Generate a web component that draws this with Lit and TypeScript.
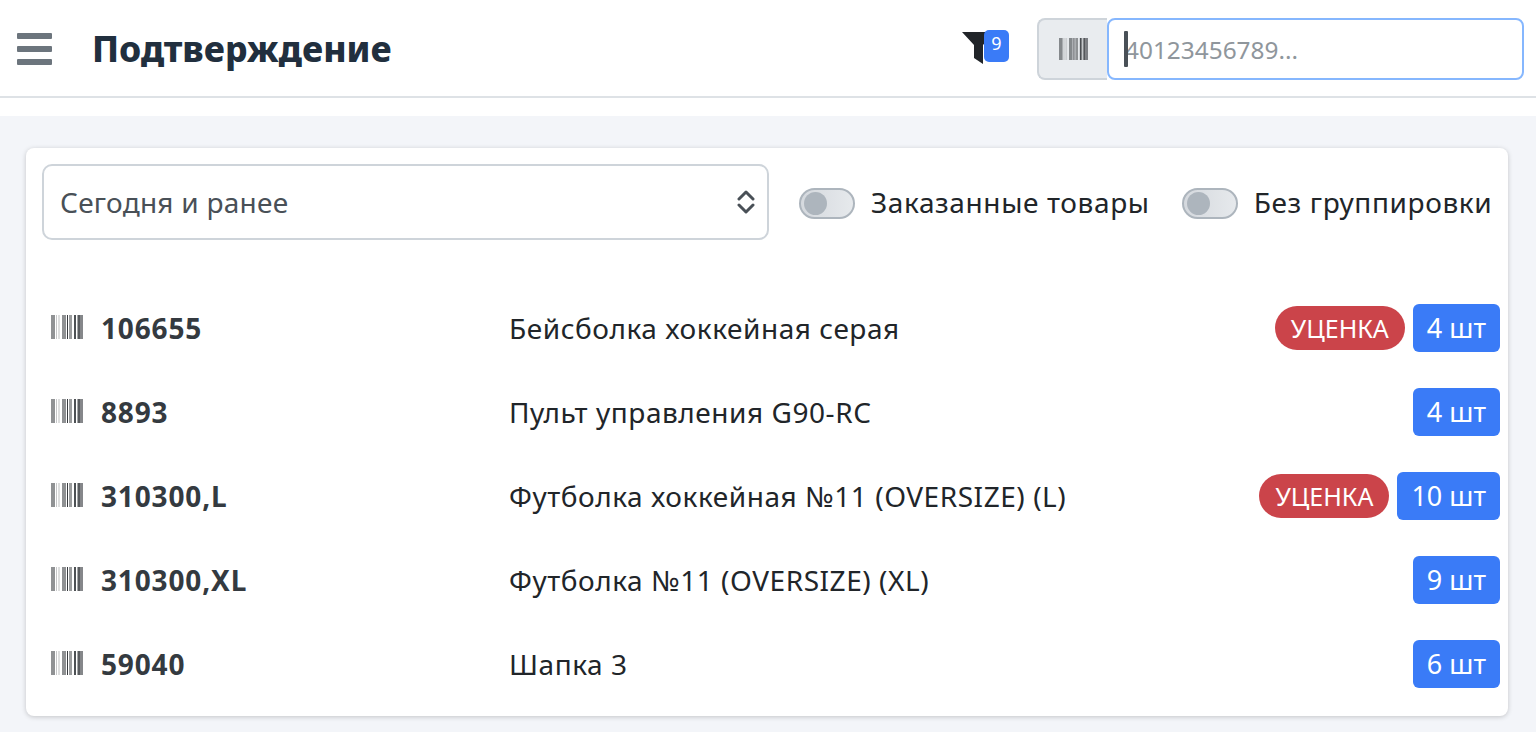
import { LitElement, html, css, svg } from 'lit';
import { customElement } from 'lit/decorators.js';

const rows = [
  { code: '106655', name: 'Бейсболка хоккейная серая', qty: '4 шт', sale: true },
  { code: '8893', name: 'Пульт управления G90-RC', qty: '4 шт', sale: false },
  { code: '310300,L', name: 'Футболка хоккейная №11 (OVERSIZE) (L)', qty: '10 шт', sale: true },
  { code: '310300,XL', name: 'Футболка №11 (OVERSIZE) (XL)', qty: '9 шт', sale: false },
  { code: '59040', name: 'Шапка 3', qty: '6 шт', sale: false },
];

// x, width, opacity of each barcode bar on a 32 wide box
const bars = [
  [0, 4, 0.5], [5, 1, 0.25], [7, 2, 0.15], [11, 4, 0.5], [16, 1, 0.9], [18, 3, 0.45],
  [23, 2, 0.8], [26, 1, 0.4], [27, 2, 0.75], [29, 3, 0.55],
];

const barcode = (w = 32, h = 24) => html`<svg class="barcode" width=${w} height=${h} viewBox="0 0 32 24" preserveAspectRatio="none">
  ${bars.map(([x, bw, o]) => svg`<rect x=${x} y="0" width=${bw} height="24" fill="#212529" opacity=${o}></rect>`)}
</svg>`;

@customElement('app-root')
export class AppRoot extends LitElement {
  static styles = css`
    :host {
      display: block;
      min-height: 732px;
      background: #f3f5f9;
      font-family: 'Noto Sans', 'Open Sans', sans-serif;
      color: #212529;
    }

    .top {
      display: flex;
      align-items: center;
      height: 94px;
      background: #fff;
      border-bottom: 2px solid #dee2e6;
      padding: 2px 12px 0 17px;
    }

    .burger {
      display: flex;
      flex-direction: column;
      gap: 7px;
      width: 35px;
      margin-right: 40px;
    }

    .burger span {
      height: 6px;
      border-radius: 1px;
      background: #6c757d;
    }

    h1 {
      margin: 0;
      font-size: 35.5px;
      font-weight: 800;
      color: #212f3e;
      flex: 1;
      line-height: 1;
    }

    .filter {
      position: relative;
      width: 47px;
      height: 34px;
      margin-right: 28px;
    }

    .filter .badge {
      position: absolute;
      left: 22px;
      top: -2px;
      width: 25px;
      height: 32px;
      border-radius: 5px;
      background: #3a7bf7;
      color: #fff;
      font-size: 18px;
      line-height: 26px;
      text-align: center;
    }

    .group {
      display: flex;
      width: 487px;
      height: 62px;
    }

    .prefix {
      display: flex;
      align-items: center;
      justify-content: center;
      width: 70px;
      box-sizing: border-box;
      background: #e9ecef;
      border: 2px solid #ced4da;
      border-right: 0;
      border-radius: 8px 0 0 8px;
    }

    .field {
      position: relative;
      flex: 1;
    }

    input {
      width: 100%;
      height: 100%;
      box-sizing: border-box;
      border: 2px solid #86b7fe;
      border-radius: 8px;
      outline: none;
      padding: 0 16px;
      font: inherit;
      font-size: 24.4px;
      background: #fff;
    }

    input::placeholder {
      color: #8f969c;
      opacity: 1;
    }

    .caret {
      position: absolute;
      left: 17px;
      top: 13px;
      width: 4px;
      height: 36px;
      border-radius: 1px;
      background: #495057;
    }

    .spacer {
      height: 18px;
      background: #fff;
    }

    main {
      padding: 32px 28px 16px 26px;
    }

    .card {
      background: #fff;
      border-radius: 8px;
      box-shadow: 0 1px 5px rgba(0, 0, 0, 0.2);
      padding: 16px 8px 10px 16px;
    }

    .controls {
      display: flex;
      align-items: center;
      margin-bottom: 46px;
    }

    .select {
      position: relative;
      width: 727px;
      height: 76px;
      margin-right: 30px;
    }

    select {
      appearance: none;
      width: 100%;
      height: 100%;
      box-sizing: border-box;
      background: #fff;
      border: 2px solid #ced4da;
      border-radius: 10px;
      padding: 0 16px;
      font: inherit;
      font-size: 28px;
      letter-spacing: 0.25px;
      color: #495057;
    }

    .chevrons {
      position: absolute;
      right: 14px;
      top: 25px;
      pointer-events: none;
    }

    .toggle {
      display: flex;
      align-items: center;
      gap: 16px;
      font-size: 28px;
      letter-spacing: 0.62px;
      white-space: nowrap;
    }

    .toggle + .toggle {
      margin-left: 32px;
    }

    .switch {
      width: 56px;
      height: 31px;
      margin-top: 2px;
      box-sizing: border-box;
      border: 2px solid #adb5bd;
      border-radius: 16px;
      background: linear-gradient(90deg, #d5d9de, #e6e9ec);
      padding: 2px 3px;
    }

    .switch span {
      display: block;
      width: 23px;
      height: 23px;
      border-radius: 50%;
      background: #adb5bd;
    }

    .row {
      display: grid;
      grid-template-columns: 459px 1fr auto;
      align-items: center;
      height: 84px;
      padding-left: 9px;
    }

    .code {
      display: flex;
      align-items: center;
      gap: 18px;
      font-size: 28px;
      font-weight: 700;
      letter-spacing: 0.85px;
      color: #343a40;
    }

    .code .barcode {
      margin-top: -2px;
    }

    .name {
      font-size: 28px;
      letter-spacing: 0.55px;
      white-space: nowrap;
      margin-left: -1px;
    }

    .tags {
      display: flex;
      align-items: center;
      gap: 8px;
    }

    .sale {
      display: flex;
      align-items: center;
      justify-content: center;
      width: 130px;
      height: 44px;
      border-radius: 22px;
      background: #cb444a;
      color: #fff;
      font-size: 25px;
    }

    .qty {
      height: 48px;
      padding: 0 14px;
      border-radius: 6px;
      background: #3a7bf7;
      color: #fff;
      font-size: 27px;
      line-height: 48px;
      white-space: nowrap;
    }
  `;

  render() {
    return html`
      <header class="top">
        <div class="burger"><span></span><span></span><span></span></div>
        <h1>Подтверждение</h1>
        <div class="filter">
          <svg width="32" height="32" viewBox="0 0 32 32">
            <path d="M0 0H32L21 13V32L12 26V13Z" fill="#212529"></path>
          </svg>
          <span class="badge">9</span>
        </div>
        <div class="group">
          <div class="prefix">${barcode(29, 22)}</div>
          <div class="field">
            <input placeholder="40123456789..." />
            <span class="caret"></span>
          </div>
        </div>
      </header>
      <div class="spacer"></div>
      <main>
        <section class="card">
          <div class="controls">
            <div class="select">
              <select><option>Сегодня и ранее</option></select>
              <svg class="chevrons" width="18" height="26" viewBox="0 0 18 26" fill="none" stroke="#495057" stroke-width="3" stroke-linecap="round" stroke-linejoin="round">
                <path d="M2 10l7-7 7 7M2 16l7 7 7-7"></path>
              </svg>
            </div>
            <label class="toggle"><div class="switch"><span></span></div>Заказанные товары</label>
            <label class="toggle"><div class="switch"><span></span></div>Без группировки</label>
          </div>
          ${rows.map(
            (r) => html`
              <div class="row">
                <div class="code">${barcode()}${r.code}</div>
                <div class="name">${r.name}</div>
                <div class="tags">
                  ${r.sale ? html`<span class="sale">УЦЕНКА</span>` : ''}
                  <span class="qty">${r.qty}</span>
                </div>
              </div>
            `
          )}
        </section>
      </main>
    `;
  }
}
